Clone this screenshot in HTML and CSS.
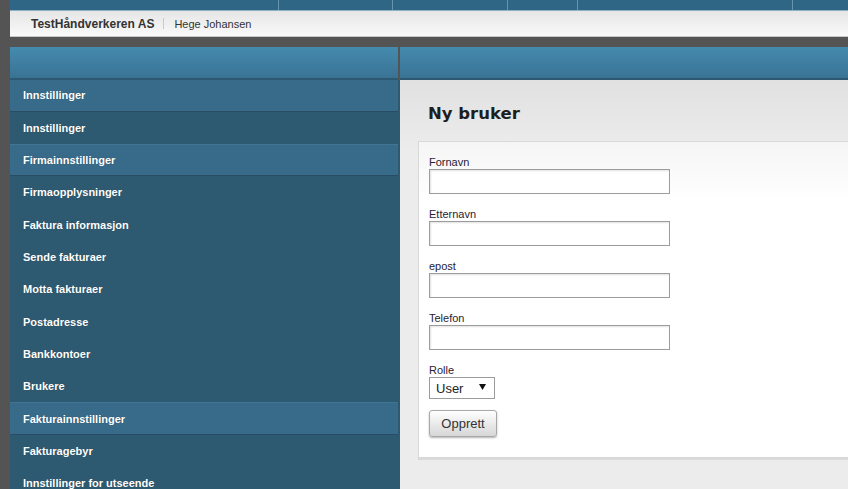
FILE: index.html
```html
<!DOCTYPE html>
<html lang="no">
<head>
<meta charset="utf-8">
<title>Ny bruker</title>
<link rel="stylesheet" href="styles.css">
</head>
<body>
<div class="page">
  <div class="topstrip">
    <span class="seg seg1"></span>
    <span class="seg seg2"></span>
    <span class="seg seg3"></span>
    <span class="seg seg4"></span>
    <span class="seg seg5"></span>
    <span class="seg seg6"></span>
  </div>
  <header class="header">
    <span class="company">TestHåndverkeren AS</span>
    <span class="sep"></span>
    <span class="user">Hege Johansen</span>
  </header>
  <div class="main">
    <aside class="left">
      <div class="bar bar-left"></div>
      <nav class="nav">
        <a class="item head first">Innstillinger</a>
        <a class="item">Innstillinger</a>
        <a class="item head">Firmainnstillinger</a>
        <a class="item">Firmaopplysninger</a>
        <a class="item">Faktura informasjon</a>
        <a class="item">Sende fakturaer</a>
        <a class="item">Motta fakturaer</a>
        <a class="item">Postadresse</a>
        <a class="item">Bankkontoer</a>
        <a class="item">Brukere</a>
        <a class="item head">Fakturainnstillinger</a>
        <a class="item">Fakturagebyr</a>
        <a class="item">Innstillinger for utseende</a>
      </nav>
    </aside>
    <section class="right">
      <div class="bar"></div>
      <div class="content">
        <h1 class="title">Ny bruker</h1>
        <form class="panel">
          <div class="field">
            <label class="label">Fornavn</label>
            <input class="input" type="text">
          </div>
          <div class="field">
            <label class="label">Etternavn</label>
            <input class="input" type="text">
          </div>
          <div class="field">
            <label class="label">epost</label>
            <input class="input" type="text">
          </div>
          <div class="field">
            <label class="label">Telefon</label>
            <input class="input" type="text">
          </div>
          <div class="field field-last">
            <label class="label">Rolle</label>
            <div class="select">
              <span class="select-text">User</span>
              <svg class="select-arrow" width="7" height="6" viewBox="0 0 7 6"><path d="M0 0H7L3.5 6Z" fill="#111"/></svg>
            </div>
          </div>
          <button class="button" type="button">Opprett</button>
        </form>
      </div>
    </section>
  </div>
</div>
</body>
</html>
```
FILE: styles.css
```css
* { box-sizing: border-box; }
html, body { margin: 0; padding: 0; }
body {
  background: #545454;
  font-family: "Liberation Sans", Arial, sans-serif;
  overflow: hidden;
}
.page {
  margin-left: 10px;
  width: 838px;
}
.topstrip {
  display: flex;
  height: 11px;
  background: #2f6585;
  border-bottom: 1px solid #8fb0c4;
}
.seg { height: 10px; border-right: 1px solid #6b93ab; }
.seg1 { width: 269px; }
.seg2 { width: 114px; }
.seg3 { width: 115px; }
.seg4 { width: 70px; }
.seg5 { width: 215px; }
.seg6 { flex: 1; border-right: none; }

.header {
  height: 26px;
  display: flex;
  align-items: center;
  padding-left: 21px;
  background: linear-gradient(#e6e6e6, #f9f9f9);
  border-bottom: 1px solid #c8c8c8;
  color: #333;
}
.company { font-weight: bold; font-size: 12px; color: #333; }
.sep { width: 1px; height: 11px; background: #c9c9c9; margin: 0 10px 0 9px; }
.user { font-size: 11px; color: #333; }

.main {
  display: flex;
  margin-top: 10px;
}
.left {
  width: 390px;
  flex: none;
}
.bar {
  height: 33px;
  background: linear-gradient(#448aaf, #3a7394);
  border-bottom: 2px solid #2c5872;
}
.bar-left { width: 388px; }
.nav {
  background: #2e5a71;
  display: flex;
  flex-direction: column;
  min-height: 420px;
}
.item {
  display: flex;
  align-items: center;
  width: 388px;
  height: 32.33px;
  padding-left: 13px;
  color: #fff;
  font-size: 11px;
  font-weight: bold;
  text-shadow: 0 0 1px rgba(0,0,0,0.3);
}
.item.head {
  background: #386b8a;
  border-top: 1px solid #3f7595;
  border-bottom: 1px solid #284d62;
}
.item.first { height: 31.5px; border-top: none; }

.right { flex: 1; min-width: 0; }
.content {
  background: linear-gradient(#e1e1e1 0, #ececec 70px, #ececec 100%);
  padding: 24px 0 30px 18px;
  min-height: 420px;
}
.title {
  margin: 0 0 17px 10px;
  font-family: "DejaVu Sans", Verdana, sans-serif;
  font-size: 16.5px;
  line-height: 20px;
  font-weight: bold;
  color: #1e1e1e;
}
.panel {
  background: linear-gradient(#f5f5f5 0, #ffffff 60px);
  border: 1px solid #d8d8d8;
  border-right: none;
  padding: 14px 0 20px 10px;
  box-shadow: 0 2px 0 #dadada;
}
.field {
  display: flex;
  flex-direction: column;
  align-items: flex-start;
  margin-bottom: 14px;
}
.field-last { margin-bottom: 11px; }
.label {
  font-size: 11px;
  line-height: 13px;
  color: #2a2233;
}
.input {
  width: 241px;
  height: 25px;
  margin: 0;
  border: 1px solid #9c9c9c;
  background: #fff;
  box-shadow: inset 1px 1px 2px rgba(0,0,0,0.12);
  padding: 0 4px;
}
.select {
  width: 66px;
  height: 22px;
  border: 1px solid #9c9c9c;
  background: #fff;
  display: flex;
  align-items: center;
  justify-content: space-between;
  padding: 0 8px 0 6px;
  font-size: 13px;
  color: #222;
}
.select-arrow { margin-top: -3px; }
.button {
  display: block;
  width: 68px;
  height: 27px;
  margin: 0;
  padding: 0;
  border: 1px solid #a8a8a8;
  border-radius: 3px;
  background: linear-gradient(#ffffff, #d6d6d6);
  box-shadow: 0 1px 2px rgba(0,0,0,0.3);
  font-family: "Liberation Sans", Arial, sans-serif;
  font-size: 13px;
  color: #333;
}
```
